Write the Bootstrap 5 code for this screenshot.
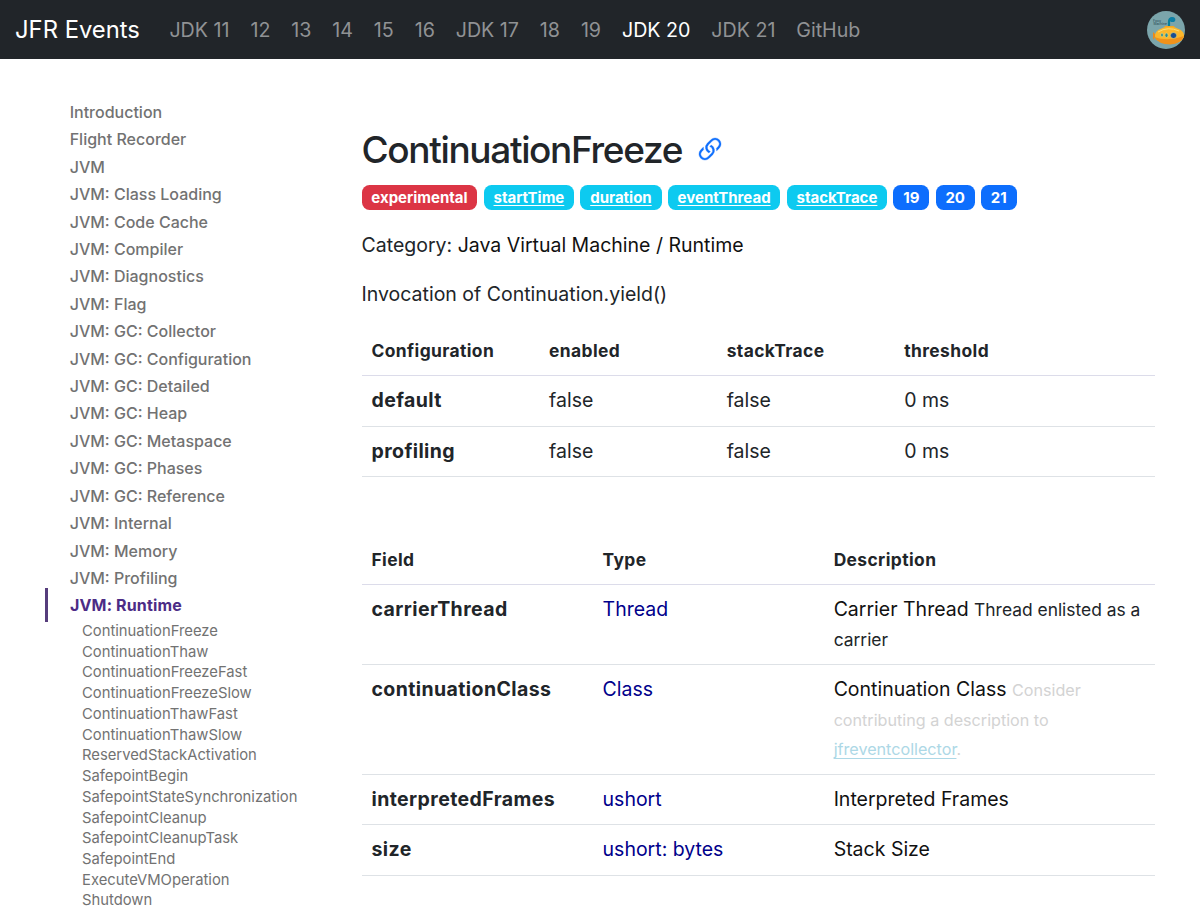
<!DOCTYPE html>
<html lang="en">
<head>
<meta charset="utf-8">
<meta name="viewport" content="width=device-width, initial-scale=1">
<title>JFR Events</title>
<link href="https://cdn.jsdelivr.net/npm/bootstrap@5.3.0/dist/css/bootstrap.min.css" rel="stylesheet">
<style>
  body { font-family: Inter, "Liberation Sans", sans-serif; font-size: 19.5px; line-height: 30px; height: 913px; overflow: hidden; }
  .topbar { height: 59px; background: #212529; padding: 0 15px; }
  .topbar .navbar-brand { font-size: 23.8px; margin: 1px 30px 0 0; padding: 0; color: #fff; white-space: nowrap; }
  .topbar .nav-link { padding: 0 !important; color: #909294; white-space: nowrap; }
  .topbar .nav-link.active { color: #fff; }
  .versions { gap: 20.9px; font-size: 19.65px; margin-left: -.5px; }
  .sidebar { width: 361.5px; padding: 40px 0 0 45px; flex: none; }
  .sidebar .nav-link { padding: 0 0 0 24.7px; color: #727272; font-size: 16px; font-weight: 500; line-height: 27.41px; }
  .sidebar .nav-link.active { color: #4c2c86; font-weight: 700; letter-spacing: .15px; border-left: 3px solid #563d7c; padding-left: 22px; line-height: 34px; margin: -4px 0 -1.4px; }
  .sidebar .events .nav-link { padding-left: 37px; font-size: 14.8px; font-weight: 400; line-height: 20.74px; }
  .content { width: 793.5px; padding-top: 66px; }
  .content h1 { font-size: 37px; letter-spacing: -1.35px; line-height: 50px; font-weight: 500; margin: 0; }
  .anchor-icon { margin: -1px 0 0 12px; }
  .tags { gap: 6.3px; margin-top: 10px; height: 25px; }
  .tags .badge { font-size: 15px; line-height: 15px; padding: 5px 9.8px; border-radius: 7.6px; font-weight: 700; }
  .tags a { color: #fff; text-underline-offset: 2px; }
  .category { margin: 20px 0 19.4px; }
  .path, .desc { color: #111; }
  .summary { margin: 0 0 17px; }
  .content .table { table-layout: fixed; --bs-table-bg: transparent; border-color: #dee2e6; margin-bottom: 0; color: #212529; }
  .content .table td, .content .table th { padding: 10.3px 10px 9.7px; line-height: 29.6px; }
  .content .table th { letter-spacing: .4px; }
  .content .table thead th { font-size: 17.4px; line-height: 28.8px; padding: 11px 10px 9px; border-bottom-color: #dcdcea; }
  .content .fields { margin-top: 57.5px; }
  .content small { font-size: 17.4px; line-height: 1; }
  .table a { color: #00008b; text-decoration: none; }
  .content small.hint { color: #d3d3d3; font-size: 16.15px; }
  .table .hint a { color: #add8e6; text-decoration: underline; text-underline-offset: 3px; }
  .c4 { width: 22.38%; } .c3 { width: 29.12%; }
</style>
</head>
<body>
<nav class="navbar topbar d-flex flex-nowrap">
  <a class="navbar-brand" href="#">JFR Events</a>
  <div class="versions d-flex me-auto">
    <a class="nav-link" href="#">JDK 11</a><a class="nav-link" href="#">12</a><a class="nav-link" href="#">13</a><a class="nav-link" href="#">14</a><a class="nav-link" href="#">15</a><a class="nav-link" href="#">16</a><a class="nav-link" href="#">JDK 17</a><a class="nav-link" href="#">18</a><a class="nav-link" href="#">19</a><a class="nav-link active" href="#">JDK 20</a><a class="nav-link" href="#">JDK 21</a><a class="nav-link" href="#">GitHub</a>
  </div>
  <svg width="38" height="38" viewBox="0 0 38 38" aria-label="Submarine">
    <circle cx="19" cy="19" r="19" fill="#7ba5ab"/>
    <path d="M22 16v-5q0-3.500 3-4" fill="none" stroke="#087f9b" stroke-width="2.200"/>
    <ellipse cx="25.500" cy="8.500" rx="2.800" ry="2.600" fill="#0d7fa5"/>
    <path d="M16 19l2-4h9l2 4z" fill="#f6a51c"/>
    <path d="M6 21l3 3-3 5z" fill="#ee8a18"/>
    <ellipse cx="22.500" cy="24.500" rx="14.500" ry="8.500" fill="#fbb72c"/>
    <path d="M7 26q14 5 30-1-3 8-14 8.500-11 0-16-7.500z" fill="#f0921b"/>
    <path d="M11 21q10-6 21-1" stroke="#ffdc70" fill="none"/>
    <ellipse cx="15" cy="24" rx="1.300" ry="1.900" fill="#268b9b" stroke="#fce071" stroke-width=".6"/>
    <ellipse cx="19.500" cy="24.300" rx="1.600" ry="2.200" fill="#268b9b" stroke="#fce071" stroke-width=".6"/>
    <ellipse cx="26.500" cy="24.500" rx="3.200" ry="3" fill="#164d92" stroke="#fce071" stroke-width=".6"/>
    <text x="6" y="10.500" font-size="3.600" fill="#254650">Foxy</text>
    <text x="6.500" y="14" font-size="3.300" fill="#254650">Machine</text>
  </svg>
</nav>
<div class="d-flex">
  <nav class="sidebar nav flex-column flex-nowrap">
    <a class="nav-link" href="#">Introduction</a>
    <a class="nav-link" href="#">Flight Recorder</a>
    <a class="nav-link" href="#">JVM</a>
    <a class="nav-link" href="#">JVM: Class Loading</a>
    <a class="nav-link" href="#">JVM: Code Cache</a>
    <a class="nav-link" href="#">JVM: Compiler</a>
    <a class="nav-link" href="#">JVM: Diagnostics</a>
    <a class="nav-link" href="#">JVM: Flag</a>
    <a class="nav-link" href="#">JVM: GC: Collector</a>
    <a class="nav-link" href="#">JVM: GC: Configuration</a>
    <a class="nav-link" href="#">JVM: GC: Detailed</a>
    <a class="nav-link" href="#">JVM: GC: Heap</a>
    <a class="nav-link" href="#">JVM: GC: Metaspace</a>
    <a class="nav-link" href="#">JVM: GC: Phases</a>
    <a class="nav-link" href="#">JVM: GC: Reference</a>
    <a class="nav-link" href="#">JVM: Internal</a>
    <a class="nav-link" href="#">JVM: Memory</a>
    <a class="nav-link" href="#">JVM: Profiling</a>
    <a class="nav-link active" href="#">JVM: Runtime</a>
    <div class="events">
      <a class="nav-link" href="#">ContinuationFreeze</a>
      <a class="nav-link" href="#">ContinuationThaw</a>
      <a class="nav-link" href="#">ContinuationFreezeFast</a>
      <a class="nav-link" href="#">ContinuationFreezeSlow</a>
      <a class="nav-link" href="#">ContinuationThawFast</a>
      <a class="nav-link" href="#">ContinuationThawSlow</a>
      <a class="nav-link" href="#">ReservedStackActivation</a>
      <a class="nav-link" href="#">SafepointBegin</a>
      <a class="nav-link" href="#">SafepointStateSynchronization</a>
      <a class="nav-link" href="#">SafepointCleanup</a>
      <a class="nav-link" href="#">SafepointCleanupTask</a>
      <a class="nav-link" href="#">SafepointEnd</a>
      <a class="nav-link" href="#">ExecuteVMOperation</a>
      <a class="nav-link" href="#">Shutdown</a>
    </div>
  </nav>
  <main class="content">
    <div class="d-flex align-items-center">
      <h1>ContinuationFreeze</h1>
      <svg class="anchor-icon" width="32" height="32" viewBox="0 0 16 16" fill="#0d6efd" stroke="#0d6efd" stroke-width=".15"><path d="M4.715 6.542 3.343 7.914a3 3 0 1 0 4.243 4.243l1.828-1.829A3 3 0 0 0 8.586 5.500L8 6.086a1 1 0 0 0-.154.199 2 2 0 0 1 .861 3.337L6.880 11.450a2 2 0 1 1-2.830-2.830l.793-.792a4 4 0 0 1-.128-1.287z"/><path d="M6.586 4.672A3 3 0 0 0 7.414 9.500l.775-.776a2 2 0 0 1-.896-3.346L9.120 3.550a2 2 0 1 1 2.830 2.830l-.793.792c.112.420.155.855.128 1.287l1.372-1.372a3 3 0 1 0-4.243-4.243z"/></svg>
    </div>
    <div class="tags d-flex">
      <span class="badge text-bg-danger">experimental</span>
      <span class="badge bg-info"><a href="#">startTime</a></span>
      <span class="badge bg-info"><a href="#">duration</a></span>
      <span class="badge bg-info"><a href="#">eventThread</a></span>
      <span class="badge bg-info"><a href="#">stackTrace</a></span>
      <span class="badge text-bg-primary">19</span>
      <span class="badge text-bg-primary">20</span>
      <span class="badge text-bg-primary">21</span>
    </div>
    <p class="category">Category: <span class="path">Java Virtual Machine / Runtime</span></p>
    <p class="summary">Invocation of Continuation.yield()</p>
    <table class="table">
      <colgroup><col class="c4"><col class="c4"><col class="c4"><col></colgroup>
      <thead><tr><th>Configuration</th><th>enabled</th><th>stackTrace</th><th>threshold</th></tr></thead>
      <tbody>
        <tr><th>default</th><td>false</td><td>false</td><td>0 ms</td></tr>
        <tr><th>profiling</th><td>false</td><td>false</td><td>0 ms</td></tr>
      </tbody>
    </table>
    <table class="table fields">
      <colgroup><col class="c3"><col class="c3"><col></colgroup>
      <thead><tr><th>Field</th><th>Type</th><th>Description</th></tr></thead>
      <tbody>
        <tr><th>carrierThread</th><td><a href="#">Thread</a></td><td><span class="desc">Carrier Thread</span> <small>Thread enlisted as a carrier</small></td></tr>
        <tr><th>continuationClass</th><td><a href="#">Class</a></td><td><span class="desc">Continuation Class</span> <small class="hint">Consider contributing a description to <a href="#">jfreventcollector</a>.</small></td></tr>
        <tr><th>interpretedFrames</th><td><a href="#">ushort</a></td><td><span class="desc">Interpreted Frames</span></td></tr>
        <tr><th>size</th><td><a href="#">ushort: bytes</a></td><td><span class="desc">Stack Size</span></td></tr>
      </tbody>
    </table>
  </main>
</div>
<script src="https://cdn.jsdelivr.net/npm/bootstrap@5.3.0/dist/js/bootstrap.bundle.min.js"></script>
</body>
</html>
